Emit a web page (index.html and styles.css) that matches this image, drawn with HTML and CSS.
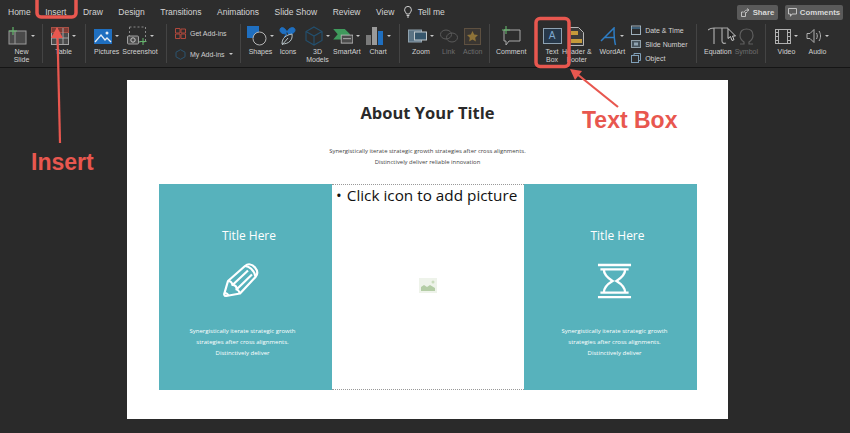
FILE: index.html
```html
<!DOCTYPE html>
<html lang="en">
<head>
<meta charset="utf-8">
<title>Insert Text Box</title>
<link rel="stylesheet" href="styles.css">
</head>
<body>
<div class="app">
  <header class="tabs">
    <nav class="tab-list">
      <span>Home</span><span class="active">Insert</span><span>Draw</span><span>Design</span><span>Transitions</span><span>Animations</span><span>Slide Show</span><span>Review</span><span>View</span>
      <span class="tell">
        <svg width="8" height="12" viewBox="0 0 8 12" fill="none" stroke="#cfcfcf" stroke-width="1"><path d="M2.4 8C2.2 6.5.6 5.8.6 3.8a3.4 3.4 0 0 1 6.8 0C7.400 5.800 5.800 6.500 5.600 8zM2.600 9.500h2.800M3 11h2"/></svg>
        Tell me
      </span>
    </nav>
    <div class="actions">
      <button class="btn btn-share"><svg width="9" height="9" viewBox="0 0 9 9" fill="none" stroke="#ccc" stroke-width=".9"><path d="M6 4.500H4.500v4H.5V4h2M3 4.500C3.500 2.500 5 2 7 2M6 .5 8 2 6 3.500"/></svg>Share</button>
      <button class="btn btn-comments"><svg width="9" height="9" viewBox="0 0 9 9" fill="none" stroke="#ccc" stroke-width=".9"><path d="M.5.500h8v5.500H4L2.500 8.300V6h-2z"/></svg>Comments</button>
    </div>
  </header>

  <section class="ribbon">
    <div class="group g-new">
      <div class="tool"><div class="ico"><svg width="20" height="18" viewBox="0 0 20 18" fill="none"><rect x="1" y="4" width="17" height="13" fill="#4a4a4a" stroke="#9b9b9b"/><path d="M7 4v13" stroke="#9b9b9b"/><path d="M5 0v8M1 4h8" stroke="#63b56a" stroke-width="1.200"/></svg><i class="caret"></i></div><span>New<br>Slide</span></div>
    </div>
    <div class="group g-table">
      <div class="tool"><div class="ico"><svg width="18" height="18" viewBox="0 0 18 18" fill="none" stroke="#a5a5a5"><rect x=".5" y=".5" width="17" height="17" fill="#4b4b4b"/><rect x=".5" y=".5" width="17" height="5" fill="#7d3b34" stroke="#a85045"/><path d="M6 1v16M12 1v16M1 11h16"/></svg><i class="caret"></i></div><span>Table</span></div>
    </div>
    <div class="group g-pics">
      <div class="tool"><div class="ico"><svg width="18" height="15" viewBox="0 0 18 15"><rect width="18" height="15" fill="#1f6fc0"/><path d="M1 13 7 6l4 5 2-2 4 4" fill="none" stroke="#e8eef5" stroke-width="1.300"/><circle cx="13" cy="4" r="1.500" fill="#e8eef5"/></svg><i class="caret"></i></div><span>Pictures</span></div>
      <div class="tool"><div class="ico"><svg width="20" height="20" viewBox="0 0 20 20" fill="none"><rect x="2.500" y="1" width="16" height="15" stroke="#8a8a8a" stroke-dasharray="2 2"/><rect x="0.500" y="10" width="11" height="8" rx="1" fill="#4a4a4a" stroke="#a0a0a0"/><circle cx="6" cy="14" r="2.200" stroke="#c8c8c8"/><path d="M16 12v7M12.500 15.500h7" stroke="#63b56a"/></svg><i class="caret"></i></div><span>Screenshot</span></div>
    </div>
    <div class="group g-addins">
      <div class="addin"><svg width="11" height="11" viewBox="0 0 11 11" fill="none" stroke="#b0483c"><path d="M.5.500h4.500v4.500H.5zM6 1h4.500v4H6zM.5 6h4.500v4.500H.5zM6 6h4.500v4.500H6z"/></svg><span>Get Add-ins</span></div>
      <div class="addin"><svg width="11" height="11" viewBox="0 0 11 11" fill="none" stroke="#2c5470"><path d="M5.500.7 10 3.200v4.600L5.500 10.300 1 7.800V3.200z"/></svg><span>My Add-ins</span><i class="caret"></i></div>
    </div>
    <div class="group g-insert">
      <div class="tool"><div class="ico"><svg width="20" height="20" viewBox="0 0 20 20" fill="none"><rect width="12" height="12" fill="#1f6fc0"/><circle cx="12.500" cy="12.500" r="6.500" fill="#2b2b2b" stroke="#b5b5b5"/></svg><i class="caret"></i></div><span>Shapes</span></div>
      <div class="tool"><div class="ico"><svg width="18" height="20" viewBox="0 0 18 20" fill="none"><path d="M8 6C5 0 1 1 1 4s3 4 7 4l-3 3M8 6c3-6 8-5 8-2s-3 4-7 4" fill="#1f6fc0" stroke="#1f6fc0"/><path d="M3 18c0-6 4-9 10-10 1 6-3 10-10 10zM3 19 9 12" stroke="#b8c4c8" stroke-width="1"/></svg></div><span>Icons</span></div>
      <div class="tool t-3d"><div class="ico"><svg width="18" height="20" viewBox="0 0 18 20" fill="none" stroke="#23506f" stroke-width="1.100"><path d="M9 1 17 5.500v9L9 19 1 14.500v-9zM1 5.500 9 10l8-4.500M9 10v9"/></svg><i class="caret"></i></div><span>3D<br>Models</span></div>
      <div class="tool"><div class="ico"><svg width="20" height="16" viewBox="0 0 22 18"><path d="M0 1h13l6 6-6 6H0l5-6z" fill="#3f9a5c"/><rect x="9" y="8" width="13" height="9" fill="#4b4b4b" stroke="#b8b8b8"/><path d="M11 12h9" stroke="#b8b8b8"/></svg><i class="caret"></i></div><span>SmartArt</span></div>
      <div class="tool"><div class="ico"><svg width="18" height="20" viewBox="0 0 18 20"><rect y="9" width="5" height="10" fill="#7a7a7a"/><rect x="6" y="1" width="5" height="18" fill="#9a9a9a"/><rect x="12" y="5" width="5" height="14" fill="#1f6fc0"/></svg><i class="caret"></i></div><span>Chart</span></div>
    </div>
    <div class="group g-links">
      <div class="tool"><div class="ico"><svg width="19" height="14" viewBox="0 0 19 14" fill="none"><rect x=".5" y="1" width="13" height="12" fill="#5b7384" stroke="#90a2ae"/><rect x="6.500" y="3" width="12" height="8" fill="#36566c" stroke="#c0c8cc"/></svg><i class="caret"></i></div><span>Zoom</span></div>
      <div class="tool dim"><div class="ico"><svg width="18" height="14" viewBox="0 0 18 14" fill="none" stroke="#5a5a5a"><ellipse cx="6" cy="5.500" rx="5.500" ry="4.500"/><ellipse cx="12" cy="8.500" rx="5.500" ry="4.500"/></svg></div><span>Link</span></div>
      <div class="tool dim"><div class="ico"><svg width="17" height="17" viewBox="0 0 17 17"><rect x=".5" y=".5" width="16" height="16" fill="#3a3632" stroke="#5e5040"/><path d="m8.500 3 1.700 3.600 3.800.5-2.800 2.600.7 3.800-3.400-1.900-3.400 1.900.7-3.800L3 7.100l3.800-.5z" fill="#8d7238"/></svg></div><span>Action</span></div>
    </div>
    <div class="group g-comment">
      <div class="tool"><div class="ico"><svg width="20" height="20" viewBox="0 0 20 20" fill="none"><path d="M3 4h16v11H8l-3 4v-4H3z" stroke="#a8a8a8"/><path d="M5 0v8M1 4h8" stroke="#63b56a" stroke-width="1.100"/></svg></div><span>Comment</span></div>
    </div>
    <div class="group g-text">
      <div class="tool t-box"><div class="ico"><div class="textbox-icon">A</div></div><span>Text<br>Box</span></div>
      <div class="tool t-header"><div class="ico"><svg width="15" height="19" viewBox="0 0 15 19"><path d="M.5.500h9l5 5v13H.5z" fill="#3a3a3a" stroke="#b8b8b8"/><rect x="2" y="4" width="7" height="4" fill="#c49a3a"/><rect x="2" y="12" width="11" height="4" fill="#c49a3a"/></svg></div><span>Header &amp;<br>Footer</span></div>
      <div class="tool t-word"><div class="ico"><svg width="17" height="19" viewBox="0 0 17 19" fill="none" stroke="#2e7dc4" stroke-width="1.500"><path d="M1 14 14 1c0 6 0 12 1.500 17M4.500 10.500h10"/></svg><i class="caret"></i></div><span>WordArt</span></div>
      <ul class="mini">
        <li><svg width="10" height="10" viewBox="0 0 10 10" fill="none" stroke="#9fb0bb"><rect x=".5" y="1" width="9" height="8.500"/><path d="M.5 3h9" stroke="#4f8fc0"/></svg>Date &amp; Time</li>
        <li><svg width="10" height="10" viewBox="0 0 10 10"><rect x=".5" y="1.500" width="9" height="7" fill="#46535c" stroke="#90a0aa"/><rect x="3" y="3.500" width="4" height="3" fill="#8fa4b2"/></svg>Slide Number</li>
        <li><svg width="10" height="10" viewBox="0 0 10 10" fill="none" stroke="#7f9fb8"><rect x=".5" y="2.500" width="7" height="7"/><path d="M3 2.500V.5h6.500v7h-2"/></svg>Object</li>
      </ul>
    </div>
    <div class="group g-math">
      <div class="tool"><div class="ico"><svg width="20" height="18" viewBox="0 0 20 18" fill="none" stroke="#a8a8a8" stroke-width="1.200"><path d="M0 3c2-2 4-2 6-2h14M6 1v16M14 1v13c0 2 2 3 4 2"/></svg></div><span>Equation</span></div>
      <div class="tool dim"><div class="ico"><svg width="15" height="17" viewBox="0 0 15 17" fill="none" stroke="#5f5f5f" stroke-width="1.200"><path d="M1 16h4v-2C2 12 1 10 1 7.500 1 3 4 1 7.500 1S14 3 14 7.500c0 2.500-1 4.500-4 6.500v2h4"/></svg></div><span>Symbol</span></div>
    </div>
    <div class="group g-media">
      <div class="tool"><div class="ico"><svg width="16" height="15" viewBox="0 0 16 15" fill="none" stroke="#b0b0b0"><rect x=".5" y=".5" width="15" height="14"/><path d="M3.500 1v13M12.500 1v13M1 3.500h2M1 7.500h2M1 11.500h2M13 3.500h2M13 7.500h2M13 11.500h2"/></svg><i class="caret"></i></div><span>Video</span></div>
      <div class="tool"><div class="ico"><svg width="16" height="16" viewBox="0 0 16 16" fill="none" stroke="#b0b0b0"><path d="M1 5.500h3L8 1.500v13l-4-4H1zM10.500 5c1 2 1 4 0 6M13 3c2 3 2 7 0 10"/></svg><i class="caret"></i></div><span>Audio</span></div>
    </div>
  </section>

  <main class="workspace">
    <article class="slide">
      <h1>About Your Title</h1>
      <p class="intro">Synergistically iterate strategic growth strategies after cross alignments.<br>Distinctively deliver reliable innovation</p>
      <div class="panels">
        <section class="card card-left">
          <h2>Title Here</h2>
          <svg class="card-icon" width="36" height="36" viewBox="0 0 36 36" fill="none" stroke="#fff" stroke-width="2.200" stroke-linejoin="round"><path d="M3 33c-2 0-2-2-1.500-3L5 18 22 3c3-2.500 7-2 10 1.500s3 6.500.5 9.500L17 30.500z"/><path d="M5 18c3 0 4 1.500 4.500 4 2.500 0 4.500 1.500 4 4.500 1.500 0 2.500 1.500 3.500 4M9.500 22 25 7.500M14 26 29 11.500M22 3c4 0 9 4 10.500 10.500"/><path d="M1.500 30c2 0 3.500 1 4 3" /></svg>
          <p>Synergistically iterate strategic growth<br>strategies after cross alignments.<br>Distinctively deliver</p>
        </section>
        <section class="picture">
          <div class="pic-text"><span class="bullet">•</span>Click icon to add picture</div>
          <svg class="pic-icon" width="18" height="15" viewBox="0 0 18 15"><rect width="18" height="15" fill="#eef3ea"/><path d="M2 13V9l3-2 3 2 3-2 5 3v3z" fill="#b4cda6"/><circle cx="14" cy="4" r="1.500" fill="#c9dcbc"/></svg>
        </section>
        <section class="card card-right">
          <h2>Title Here</h2>
          <svg class="card-icon" width="35" height="36" viewBox="0 0 36 36" fill="none" stroke="#fff" stroke-width="2.400"><path d="M1 1.500h34M3.500 6h29M1 34.500h34M3.500 30h29M7 6c0 6 4 9 9 12-5 3-9 6-9 12M29 6c0 6-4 9-9 12 5 3 9 6 9 12"/></svg>
          <p>Synergistically iterate strategic growth<br>strategies after cross alignments.<br>Distinctively deliver</p>
        </section>
      </div>
    </article>
  </main>

  <svg class="marks" width="850" height="433" viewBox="0 0 850 433" fill="none" stroke="#e8574f">
    <rect x="37" y="-6" width="39" height="23" rx="4" stroke-width="3.500"/>
    <rect x="536" y="18.500" width="33" height="48" rx="4" stroke-width="3.500"/>
    <path d="M60 143 57.500 34" stroke-width="2.200"/>
    <path d="M57 27 51 38h12z" fill="#e8574f" stroke="none"/>
    <path d="M618 107 577 74" stroke-width="2.200"/>
    <path d="M570 69 582 71 575 80z" fill="#e8574f" stroke="none"/>
  </svg>
  <div class="callout callout-insert">Insert</div>
  <div class="callout callout-text">Text Box</div>
  <svg class="cursor" width="9" height="13" viewBox="0 0 9 13"><path d="M1 .5v10l2.500-2 1.500 4 2-.8L5.500 8H8.500z" fill="#222" stroke="#ddd" stroke-width=".9"/></svg>
</div>
</body>
</html>
```
FILE: styles.css
```css
* { box-sizing: border-box; }
html, body { margin: 0; padding: 0; }
body { width: 850px; height: 433px; overflow: hidden; background: #2a2a2a; font-family: "Liberation Sans", Arial, sans-serif; }
.app { position: relative; width: 850px; height: 433px; display: flex; flex-direction: column; }

.tabs { height: 24px; display: flex; justify-content: space-between; align-items: center; padding: 0 7px 0 8px; background: #2d2d2d; }
.tab-list { display: flex; gap: 15.500px; font-size: 8.500px; color: #d4d4d4; align-items: center; }
.active { margin: 0 1px 0 -1px; box-shadow: 0 7px 0 -6px #d8d8d8; }
.tell { display: flex; align-items: center; gap: 6px; margin-left: -6px; }
.actions { display: flex; gap: 7px; }
.btn { height: 15px; display: flex; align-items: center; justify-content: center; gap: 3px; padding: 0; border: 0; border-radius: 2px; background: #5a5a5a; color: #d8d8d8; font: bold 7.800px "Liberation Sans", Arial, sans-serif; }
.btn-share { width: 41px; }
.btn-comments { width: 58px; }

.ribbon { height: 44px; display: flex; background: #2d2d2d; border-bottom: 1px solid #151515; }
.group { display: flex; height: 39px; border-right: 1px solid #444; flex: none; }
.g-new { width: 43px; padding-left: 8px; }
.g-table { width: 43px; padding-left: 8px; }
.g-pics { width: 81px; padding-left: 8px; gap: 3px; }
.g-addins { width: 74px; padding: 3px 0 0 8px; flex-direction: column; gap: 9px; }
.g-insert { width: 159px; padding-left: 6px; gap: 5px; }
.g-links { width: 90px; padding-left: 8px; gap: 5.500px; }
.g-comment { width: 52px; padding-left: 6px; border: 0; }
.g-text { width: 155px; }
.g-math { width: 69px; padding-left: 7px; gap: 3px; }
.g-media { border: 0; padding-left: 9px; gap: 8px; }
.t-3d { margin: 0 -2px 0 3px; }
.t-box { width: 20px; }
.t-word { margin-left: 8px; }

.tool { display: flex; flex-direction: column; align-items: center; font-size: 7px; line-height: 7.500px; color: #d2d2d2; text-align: center; white-space: nowrap; }
.tool.dim { color: #6e6e6e; }
.ico { height: 24px; display: flex; align-items: center; gap: 3px; }
.caret { display: block; width: 0; height: 0; border: 2px solid transparent; border-top: 2.500px solid #c8c8c8; border-bottom: 0; }
.addin { display: flex; align-items: center; gap: 4px; font-size: 7px; color: #cfcfcf; white-space: nowrap; height: 12px; }
.textbox-icon { width: 19px; height: 16px; background: #27384a; border: 1px solid #8ea2b2; color: #7fa9cf; font-size: 10px; line-height: 14px; text-align: center; }
.mini { list-style: none; margin: 0 0 0 6px; padding: 1px 0 0; display: flex; flex-direction: column; gap: 4px; font-size: 7px; color: #d2d2d2; }
.mini li { height: 10px; display: flex; align-items: center; gap: 4px; white-space: nowrap; }

.workspace { flex: 1; padding: 12px 0 0 127px; background: #2a2a2a; }
.slide { width: 601px; height: 339px; background: #fff; display: flex; flex-direction: column; align-items: center; padding-top: 21px; }
.slide h1 { margin: 0; font: bold 16.500px/24px "Open Sans", sans-serif; color: #2a2a2a; }
.intro { margin: 21px 0 0; font: 5.900px/10.500px "Open Sans", sans-serif; color: #444; text-align: center; }
.panels { margin: 17px 0 0 1px; display: flex; width: 538px; height: 206px; }
.card { width: 173px; background: #57b2bc; color: #fff; display: flex; flex-direction: column; align-items: center; text-align: center; padding-top: 44px; }
.card h2 { margin: 0; font: 12px/16px "Open Sans", sans-serif; }
.card-icon { margin-top: 19px; display: block; }
.card p { margin: 27px 0 0; font: 6px/11px "Open Sans", sans-serif; }
.card-left h2 { margin-left: 7px; }
.card-left .card-icon { margin-left: -9px; }
.card-left p { margin-left: -6px; }
.card-right { padding-left: 8px; }
.card-right h2 { margin-left: 6px; }
.picture { width: 192px; border: 1px dotted #999; border-left: 0; border-right: 0; display: flex; flex-direction: column; align-items: center; }
.pic-text { align-self: flex-start; padding: 0 0 0 4px; font: 15.300px/20px "Open Sans", sans-serif; color: #111; white-space: nowrap; }
.bullet { margin-right: 5px; }
.pic-icon { margin-top: 73px; }

.marks { position: absolute; left: 0; top: 0; pointer-events: none; }
.callout { position: absolute; color: #e8574f; font-weight: bold; white-space: nowrap; }
.callout-insert { left: 31px; top: 149px; font-size: 23px; line-height: 26px; }
.callout-text { left: 582px; top: 106px; font-size: 23px; line-height: 28px; }
.cursor { position: absolute; left: 727px; top: 28px; }
```
